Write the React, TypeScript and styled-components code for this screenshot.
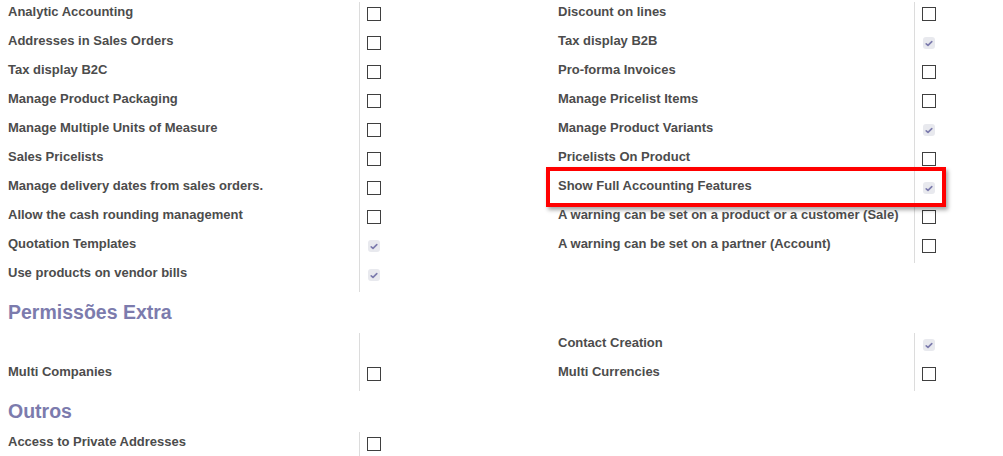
import React from "react";
import styled, { createGlobalStyle } from "styled-components";

const Global = createGlobalStyle`
  html, body { margin: 0; padding: 0; background: #fff; }
  body { font-family: "Liberation Sans", Arial, sans-serif; color: #4c4c4c; }
`;

const Page = styled.div`
  padding-top: 2px;
  width: 1003px;
  overflow: hidden;
`;

const Columns = styled.div`
  display: flex;
  align-items: flex-start;
`;

const Group = styled.div<{ $label: number }>`
  width: 550px;
  flex: none;
  display: grid;
  grid-template-columns: ${(p) => p.$label}px 1fr;
`;

const Row = styled.div`
  display: contents;
`;

const Label = styled.div`
  position: relative;
  height: 29px;
  box-sizing: border-box;
  padding-left: 8px;
  font-size: 13px;
  line-height: 19.5px;
  font-weight: 700;
  color: #4c4c4c;
  white-space: nowrap;
`;

const CheckCell = styled.div`
  height: 29px;
  box-sizing: border-box;
  border-left: 1px solid #dcdcdc;
  padding-left: 7px;
  padding-top: 5px;
`;

const Box = styled.span`
  display: block;
  width: 14px;
  height: 14px;
  box-sizing: border-box;
  border: 1px solid #3f3f3f;
  background: #fff;
`;

const Checked = styled.span`
  display: flex;
  align-items: center;
  justify-content: center;
  width: 12px;
  height: 12px;
  margin: 1px 0 0 1px;
  border-radius: 3px;
  background: #e8e9ee;
`;

const Heading = styled.h2`
  margin: 0;
  padding: 9px 0 9px 8px;
  height: 41px;
  box-sizing: border-box;
  font-size: 19.5px;
  line-height: 23px;
  font-weight: 700;
  color: #7c7bad;
`;

const Highlight = styled.span`
  position: absolute;
  top: -9px;
  left: -4px;
  width: 400px;
  height: 40px;
  box-sizing: border-box;
  border: 4px solid #ff0000;
  box-shadow: 2px 3px 4px rgba(0, 0, 0, 0.35);
  pointer-events: none;
`;

type Item = { label: string; state: "on" | "off" | "none"; marked?: boolean };

function Check({ state }: { state: Item["state"] }) {
  if (state === "none") return null;
  if (state === "off") return <Box />;
  return (
    <Checked>
      <svg width="8" height="7" viewBox="0 0 8 7">
        <path d="M1.2 3.8 L3 5.4 L6.8 1.6" fill="none" stroke="#7c7bad" strokeWidth="1.6" strokeLinecap="round" strokeLinejoin="round" />
      </svg>
    </Checked>
  );
}

function GroupView({ items, label }: { items: Item[]; label: number }) {
  return (
    <Group $label={label}>
      {items.map((it, i) => (
        <Row key={i}>
          <Label>
            {it.label}
            {it.marked && <Highlight />}
          </Label>
          <CheckCell>
            <Check state={it.state} />
          </CheckCell>
        </Row>
      ))}
    </Group>
  );
}

const left1: Item[] = [
  { label: "Analytic Accounting", state: "off" },
  { label: "Addresses in Sales Orders", state: "off" },
  { label: "Tax display B2C", state: "off" },
  { label: "Manage Product Packaging", state: "off" },
  { label: "Manage Multiple Units of Measure", state: "off" },
  { label: "Sales Pricelists", state: "off" },
  { label: "Manage delivery dates from sales orders.", state: "off" },
  { label: "Allow the cash rounding management", state: "off" },
  { label: "Quotation Templates", state: "on" },
  { label: "Use products on vendor bills", state: "on" },
];

const right1: Item[] = [
  { label: "Discount on lines", state: "off" },
  { label: "Tax display B2B", state: "on" },
  { label: "Pro-forma Invoices", state: "off" },
  { label: "Manage Pricelist Items", state: "off" },
  { label: "Manage Product Variants", state: "on" },
  { label: "Pricelists On Product", state: "off" },
  { label: "Show Full Accounting Features", state: "on", marked: true },
  { label: "A warning can be set on a product or a customer (Sale)", state: "off" },
  { label: "A warning can be set on a partner (Account)", state: "off" },
];

const left2: Item[] = [
  { label: "", state: "none" },
  { label: "Multi Companies", state: "off" },
];

const right2: Item[] = [
  { label: "Contact Creation", state: "on" },
  { label: "Multi Currencies", state: "off" },
];

const left3: Item[] = [{ label: "Access to Private Addresses", state: "off" }];

export default function App() {
  return (
    <>
      <Global />
      <Page>
        <Columns>
          <GroupView items={left1} label={359} />
          <GroupView items={right1} label={364} />
        </Columns>
        <Heading>Permissões Extra</Heading>
        <Columns>
          <GroupView items={left2} label={359} />
          <GroupView items={right2} label={364} />
        </Columns>
        <Heading>Outros</Heading>
        <Columns>
          <GroupView items={left3} label={359} />
        </Columns>
      </Page>
    </>
  );
}
